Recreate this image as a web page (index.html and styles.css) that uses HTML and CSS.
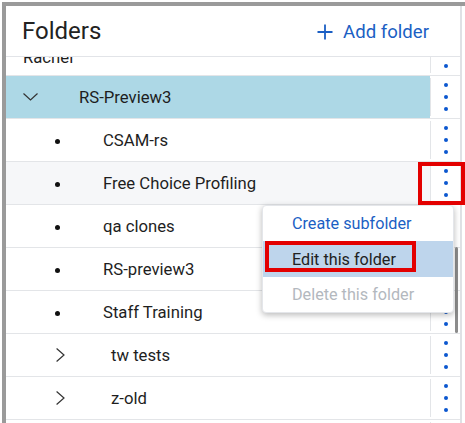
FILE: index.html
```html
<!DOCTYPE html>
<html lang="en">
<head>
<meta charset="utf-8">
<title>Folders</title>
<link rel="stylesheet" href="styles.css">
</head>
<body>
<div class="frame">
  <div class="panel">
    <header class="header">
      <h1 class="title">Folders</h1>
      <button class="add-btn" type="button">
        <svg class="plus" width="16" height="16" viewBox="0 0 16 16"><path d="M8 0.5V15.5M0.5 8H15.5" stroke="currentColor" stroke-width="1.8" fill="none"/></svg>
        <span>Add folder</span>
      </button>
    </header>
    <div class="list">
      <div class="rows">
        <div class="row partial">
          <div class="node lvl0 plain"><span class="label">Rachel</span></div>
          <div class="kebab"><svg width="4" height="28" viewBox="0 0 4 28"><circle cx="2" cy="2" r="2"/><circle cx="2" cy="14" r="2"/><circle cx="2" cy="26" r="2"/></svg></div>
        </div>
        <div class="row selected">
          <div class="node lvl0"><span class="icon"><svg width="15" height="8" viewBox="0 0 15 8"><polyline points="0.5,0.5 7.5,7 14.5,0.5" fill="none" stroke="#333" stroke-width="1.2"/></svg></span><span class="label">RS-Preview3</span></div>
          <div class="kebab"><svg width="4" height="28" viewBox="0 0 4 28"><circle cx="2" cy="2" r="2"/><circle cx="2" cy="14" r="2"/><circle cx="2" cy="26" r="2"/></svg></div>
        </div>
        <div class="row">
          <div class="node leaf"><span class="icon"><span class="bullet"></span></span><span class="label">CSAM-rs</span></div>
          <div class="kebab"><svg width="4" height="28" viewBox="0 0 4 28"><circle cx="2" cy="2" r="2"/><circle cx="2" cy="14" r="2"/><circle cx="2" cy="26" r="2"/></svg></div>
        </div>
        <div class="row hover">
          <div class="node leaf"><span class="icon"><span class="bullet"></span></span><span class="label">Free Choice Profiling</span></div>
          <div class="kebab"><svg width="4" height="28" viewBox="0 0 4 28"><circle cx="2" cy="2" r="2"/><circle cx="2" cy="14" r="2"/><circle cx="2" cy="26" r="2"/></svg></div>
        </div>
        <div class="row">
          <div class="node leaf"><span class="icon"><span class="bullet"></span></span><span class="label">qa clones</span></div>
          <div class="kebab"><svg width="4" height="28" viewBox="0 0 4 28"><circle cx="2" cy="2" r="2"/><circle cx="2" cy="14" r="2"/><circle cx="2" cy="26" r="2"/></svg></div>
        </div>
        <div class="row">
          <div class="node leaf"><span class="icon"><span class="bullet"></span></span><span class="label">RS-preview3</span></div>
          <div class="kebab"><svg width="4" height="28" viewBox="0 0 4 28"><circle cx="2" cy="2" r="2"/><circle cx="2" cy="14" r="2"/><circle cx="2" cy="26" r="2"/></svg></div>
        </div>
        <div class="row">
          <div class="node leaf"><span class="icon"><span class="bullet"></span></span><span class="label">Staff Training</span></div>
          <div class="kebab"><svg width="4" height="28" viewBox="0 0 4 28"><circle cx="2" cy="2" r="2"/><circle cx="2" cy="14" r="2"/><circle cx="2" cy="26" r="2"/></svg></div>
        </div>
        <div class="row">
          <div class="node branch"><span class="icon"><svg width="9" height="14" viewBox="0 0 9 14"><polyline points="0.6,0.5 8,7 0.6,13.5" fill="none" stroke="#333" stroke-width="1.2"/></svg></span><span class="label">tw tests</span></div>
          <div class="kebab"><svg width="4" height="28" viewBox="0 0 4 28"><circle cx="2" cy="2" r="2"/><circle cx="2" cy="14" r="2"/><circle cx="2" cy="26" r="2"/></svg></div>
        </div>
        <div class="row">
          <div class="node branch"><span class="icon"><svg width="9" height="14" viewBox="0 0 9 14"><polyline points="0.6,0.5 8,7 0.6,13.5" fill="none" stroke="#333" stroke-width="1.2"/></svg></span><span class="label">z-old</span></div>
          <div class="kebab"><svg width="4" height="28" viewBox="0 0 4 28"><circle cx="2" cy="2" r="2"/><circle cx="2" cy="14" r="2"/><circle cx="2" cy="26" r="2"/></svg></div>
        </div>
        <div class="row">
          <div class="node leaf"></div>
          <div class="kebab"></div>
        </div>
      </div>
    </div>
  </div>
</div>

<div class="scroll-thumb"></div>

<ul class="menu">
  <li class="menu-item">Create subfolder</li>
  <li class="menu-item active">Edit this folder</li>
  <li class="menu-item disabled">Delete this folder</li>
</ul>

<div class="mark mark-kebab"></div>
<div class="mark mark-edit"></div>
</body>
</html>
```

FILE: styles.css
```css
* { box-sizing: border-box; }

html, body {
  margin: 0;
  padding: 0;
  background: #fff;
  height: 423px;
  overflow: hidden;
  font-family: Roboto, "Liberation Sans", Arial, sans-serif;
  color: #222;
}

.frame {
  margin: 2px 0 0 2px;
  border-top: 4px solid #9a9a9a;
  border-left: 4px solid #9a9a9a;
  height: 421px;
}

.panel {
  width: 456px;
  height: 100%;
  border-right: 2px solid #dfe1e5;
  display: flex;
  flex-direction: column;
}

.header {
  height: 51px;
  flex: none;
  display: flex;
  align-items: center;
  justify-content: space-between;
  padding: 0 31px 0 16px;
  border-bottom: 1px solid #e2e4e8;
  position: relative;
  z-index: 1;
  background: #fff;
}

.title {
  margin: 0;
  font-size: 24px;
  font-weight: 400;
  color: #222;
}

.add-btn {
  display: flex;
  align-items: center;
  gap: 10px;
  border: 0;
  background: none;
  padding: 0;
  font-family: inherit;
  font-size: 18.6px;
  color: #1b5fc4;
  margin-top: 1px;
}

.plus { display: block; }

.list {
  flex: 1;
  overflow: hidden;
}

.rows {
  margin-top: -24px;
}

.row {
  display: grid;
  grid-template-columns: 1fr 30px;
  height: 43px;
  border-bottom: 1px solid #e3e5e8;
}

.node {
  display: flex;
  align-items: center;
  font-size: 16.7px;
  color: #1e1e1e;
  white-space: nowrap;
}

.row.selected .node { background: #add8e6; }
.row.hover .node { background: #f6f7f9; }

.row.partial .label { padding-top: 6px; }

.icon {
  display: flex;
  align-items: center;
  flex: none;
}

.lvl0 { padding-left: 17px; }
.lvl0 .icon { width: 56px; }

.leaf { padding-left: 49px; }
.leaf .icon { width: 48px; }

.branch { padding-left: 50px; }
.branch .icon { width: 55px; }

.bullet {
  width: 5px;
  height: 5px;
  border-radius: 50%;
  background: #111;
  margin-top: 2px;
}

.kebab {
  border-left: 1px solid #e3e5e8;
  display: flex;
  align-items: center;
  justify-content: center;
  margin: 2px 0;
}

.kebab svg { fill: #0b57cf; display: block; margin-left: 1px; }

.scroll-thumb {
  position: absolute;
  left: 455px;
  top: 247px;
  width: 3px;
  height: 86px;
  background: #8c8c8c;
  border-radius: 2px;
}

.menu {
  position: absolute;
  left: 262px;
  top: 205px;
  width: 192px;
  margin: 0;
  padding: 0;
  list-style: none;
  background: #fff;
  border: 1px solid #e4e6ea;
  border-radius: 4px;
  box-shadow: 0 2px 6px rgba(0, 0, 0, 0.28);
}

.menu-item {
  height: 35px;
  display: flex;
  align-items: center;
  padding-left: 29px;
  font-size: 16.2px;
  color: #1b5fc4;
  white-space: nowrap;
}

.menu-item.active {
  height: 36px;
  background: #bed5ec;
  color: #222;
}

.menu-item.disabled { color: #b3b8be; }

.mark {
  position: absolute;
  border: 4px solid #e30000;
  z-index: 2;
}

.mark-kebab {
  left: 418px;
  top: 162px;
  width: 47px;
  height: 43px;
}

.mark-edit {
  left: 265px;
  top: 241px;
  width: 151px;
  height: 31px;
}
```
